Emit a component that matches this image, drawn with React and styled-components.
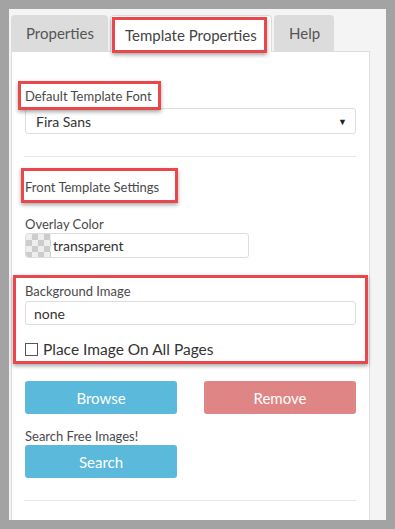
import React from "react";
import styled, {createGlobalStyle, css} from "styled-components";

const GlobalStyle = createGlobalStyle`
  html, body {
    margin: 0;
    padding: 0;
    background: #a3a3a3;
    font-family: Lato, "Open Sans", sans-serif;
  }
`

const red = "#e8474c"

const highlight = css`
  border: 3px solid ${red};
  box-shadow: 0 2px 4px rgba(0, 0, 0, 0.35);
`

const Frame = styled.div`
  margin: 9px;
  width: 377px;
  height: 511px;
  background: #f4f4f4;
  padding: 6px 0 0 2px;
  box-sizing: border-box;
  overflow: hidden;
  display: flex;
  flex-direction: column;
`

const Tabs = styled.div`
  display: flex;
  height: 36px;
  align-items: stretch;
`

const Tab = styled.div`
  display: flex;
  align-items: center;
  box-sizing: border-box;
  font-size: 15px;
  color: #555;
  border-radius: 4px 4px 0 0;
  margin-right: ${({gap}) => gap || 0}px;
  width: ${({w}) => w}px;
  padding-left: ${({pl}) => pl}px;
  background: ${({active}) => active ? "#fff" : "#dcdcdc"};
  border: ${({active}) => active ? "1px solid #ddd" : "none"};
  border-bottom: none;
  position: relative;
  z-index: 1;
  margin-bottom: ${({active}) => active ? "-1px" : "0"};
`

const TabMark = styled.span`
  ${highlight};
  margin: 1px 0 -1px 0;
  align-self: stretch;
  display: flex;
  align-items: center;
  padding: 0 7px 0 10px;
  color: #444;
`

const Panel = styled.div`
  flex: 1;
  width: 359px;
  box-sizing: border-box;
  background: #fff;
  border: 1px solid #ddd;
  border-bottom: none;
  padding: 29px 13px 0 13px;
  display: flex;
  flex-direction: column;
  color: #4a4a4a;
`

const Label = styled.div`
  font-size: 13px;
  line-height: 16px;
  color: #4a4a4a;
  margin-top: ${({mt}) => mt || 0}px;
  margin-bottom: ${({mb}) => mb || 0}px;
`

const MarkedLabel = styled(Label)`
  ${highlight};
  align-self: flex-start;
  margin-left: ${({ml}) => ml}px;
  padding: ${({pad}) => pad};
  position: relative;
  z-index: 1;
`

const Field = styled.div`
  box-sizing: border-box;
  height: ${({h}) => h ?? 25}px;
  width: ${({w}) => w ? w + "px" : "auto"};
  border: 1px solid #ddd;
  border-radius: 3px;
  display: flex;
  align-items: center;
  padding-left: ${({pl}) => pl ?? 8}px;
  padding-right: 8px;
  font-size: 14px;
  color: #333;
  background: #fff;
`

const Arrow = styled.span`
  margin-left: auto;
  font-size: 9px;
  color: #222;
`

const Swatch = styled.span`
  width: 25px;
  height: 23px;
  margin-right: 2px;
  border-radius: 3px 0 0 3px;
  background-color: #eee;
  background-image:
    linear-gradient(45deg, #ccc 25%, transparent 25%, transparent 75%, #ccc 75%),
    linear-gradient(45deg, #ccc 25%, transparent 25%, transparent 75%, #ccc 75%);
  background-size: 12px 12px;
  background-position: 0 0, 6px 6px;
`

const Rule = styled.div`
  height: 1px;
  background: #e6e6e6;
  margin: ${({m}) => m};
`

const BgSection = styled.div`
  ${highlight};
  margin: 17px -12px 0 -12px;
  padding: 5px 9px 3px 9px;
  display: flex;
  flex-direction: column;
`

const CheckRow = styled.label`
  display: flex;
  align-items: center;
  height: 18px;
  margin-top: 15px;
  font-size: 15.5px;
  color: #333;
`

const Box = styled.span`
  width: 11px;
  height: 11px;
  border: 1px solid #555;
  margin-right: 5px;
  background: #fff;
`

const ButtonRow = styled.div`
  display: flex;
  justify-content: space-between;
  margin-top: 17px;
`

const Button = styled.div`
  width: 152px;
  height: 33px;
  border-radius: 3px;
  background: ${({danger}) => danger ? "#e08585" : "#5bb9db"};
  color: #fff;
  font-size: 15px;
  display: flex;
  align-items: center;
  justify-content: center;
`

const App = () => (
    <>
        <GlobalStyle/>
        <Frame>
            <Tabs>
                <Tab w={97} pl={15} gap={2}>Properties</Tab>
                <Tab active w={162} pl={1} gap={2}>
                    <TabMark>Template Properties</TabMark>
                </Tab>
                <Tab w={60} pl={15}>Help</Tab>
            </Tabs>
            <Panel>
                <MarkedLabel ml={-7} pad="4px 6px 3px 4px" mb={-2}>Default Template Font</MarkedLabel>
                <Field h={26} pl={10}>
                    Fira Sans
                    <Arrow>▼</Arrow>
                </Field>
                <Rule m="22px 0 0 -1px"/>
                <MarkedLabel ml={-4} pad="8px 16px 5px 1px" mt={11}>Front Template Settings</MarkedLabel>
                <Label mt={13} mb={1}>Overlay Color</Label>
                <Field w={224} pl={0}>
                    <Swatch/>
                    transparent
                </Field>
                <BgSection>
                    <Label mb={2}>Background Image</Label>
                    <Field h={24}>none</Field>
                    <CheckRow>
                        <Box/>
                        Place Image On All Pages
                    </CheckRow>
                </BgSection>
                <ButtonRow>
                    <Button>Browse</Button>
                    <Button danger>Remove</Button>
                </ButtonRow>
                <Label mt={14} mb={1}>Search Free Images!</Label>
                <Button>Search</Button>
                <Rule m="22px 0 0 -1px"/>
            </Panel>
        </Frame>
    </>
)

export default App
